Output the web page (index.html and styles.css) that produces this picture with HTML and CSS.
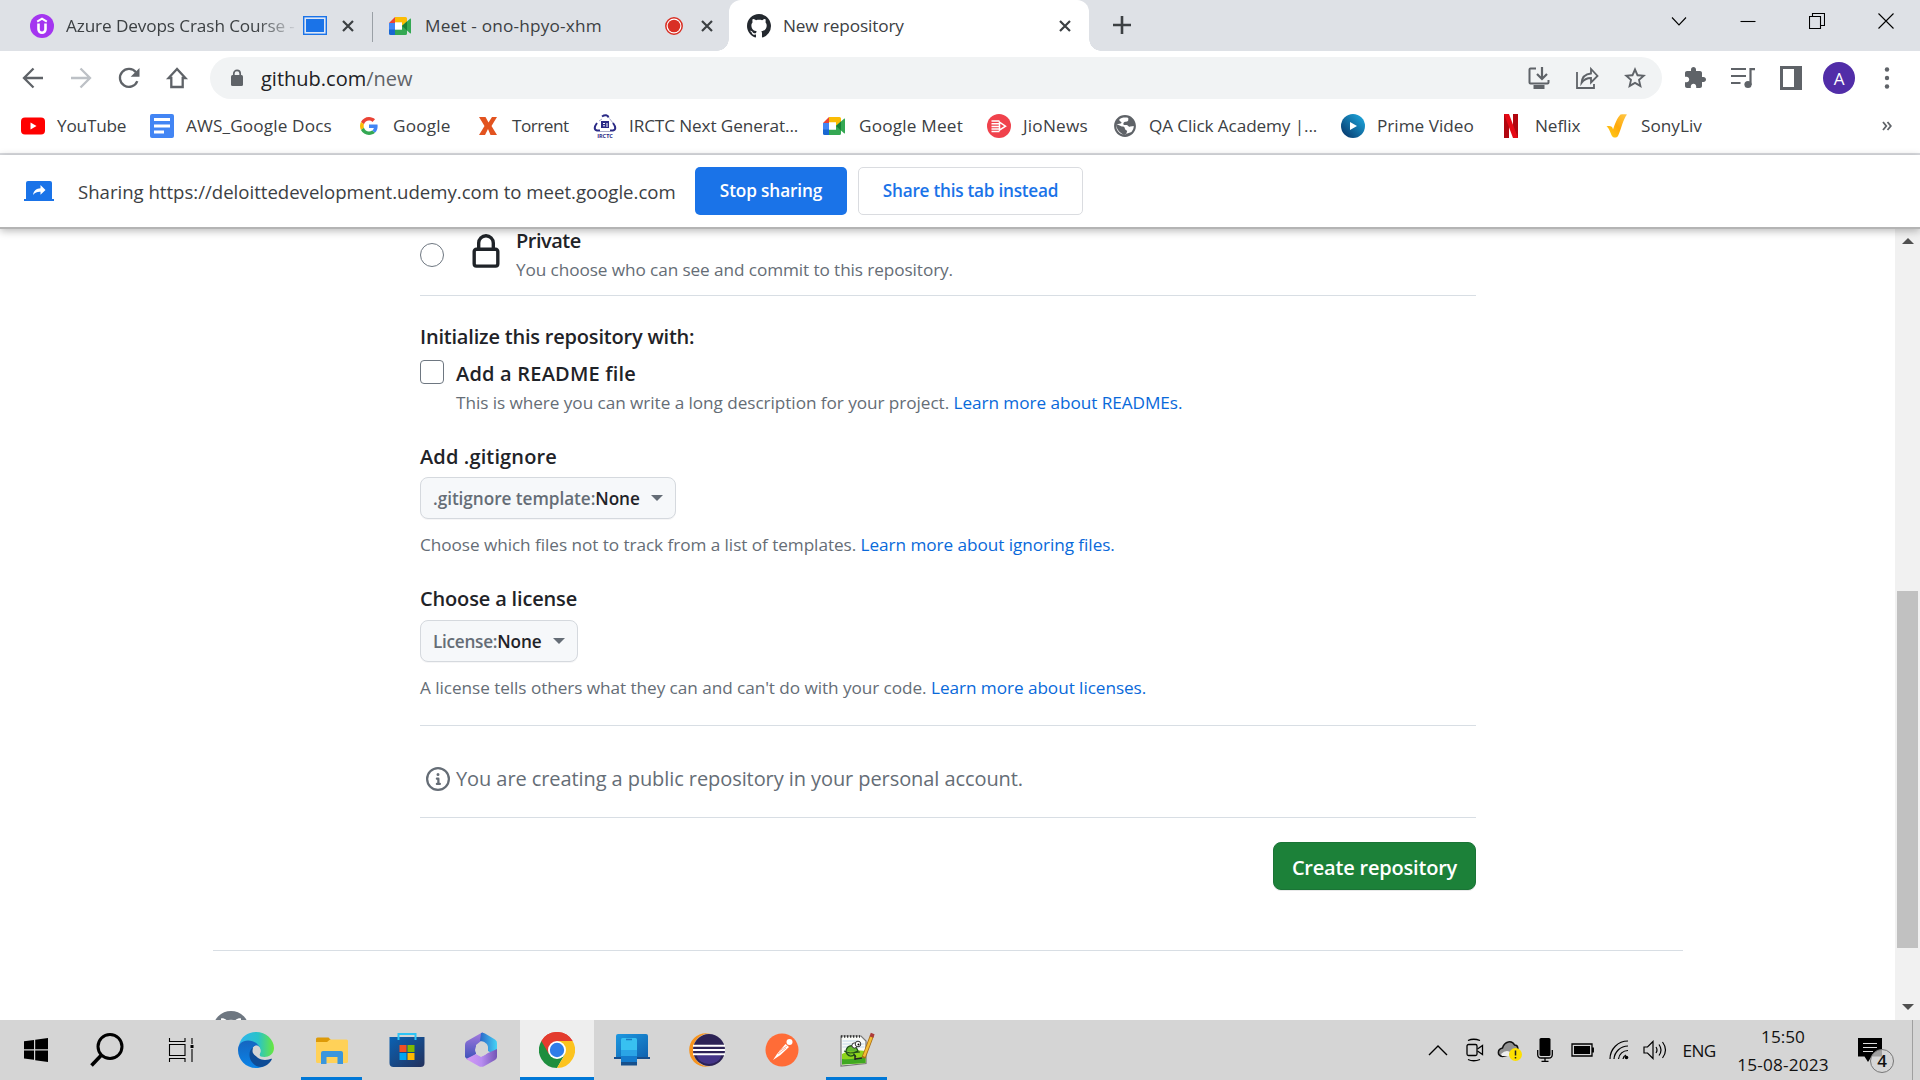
FILE: index.html
```html
<!DOCTYPE html>
<html lang="en">
<head>
<meta charset="utf-8">
<title>New repository</title>
<link rel="stylesheet" href="styles.css">
</head>
<body>
<div class="screen">

<header class="tabstrip">
  <div class="tab tab-first">
    <svg class="i24" viewBox="0 0 24 24"><circle cx="12" cy="12" r="12" fill="#a435f0"/><path d="M7.2 7.6 12 4.6l4.800 3" fill="none" stroke="#fff" stroke-width="2"/><path d="M8.500 9.500v5.800a3.500 3.500 0 0 0 7 0V9.500" fill="none" stroke="#fff" stroke-width="2.600"/></svg>
    <span class="tab-title fade ls-n12">Azure Devops Crash Course -</span>
    <svg class="share-ind" viewBox="0 0 24 19"><rect x=".7" y=".7" width="22.600" height="17.600" fill="#dfe7f5" stroke="#1a73e8" stroke-width="1.400"/><rect x="3" y="3" width="18" height="13" fill="#1a73e8"/></svg>
    <svg class="close" viewBox="0 0 12 12"><path d="M1 1l10 10M11 1 1 11"/></svg>
  </div>
  <div class="tab tab-second">
    <svg class="i24" viewBox="0 0 24 24"><use href="#meet"/></svg>
    <span class="tab-title ls-p20">Meet - ono-hpyo-xhm</span>
    <svg class="rec" viewBox="0 0 18 18"><circle cx="9" cy="9" r="8.200" fill="#fff" stroke="#d93025" stroke-width="1.500"/><circle cx="9" cy="9" r="6.300" fill="#d93025"/></svg>
    <svg class="close" viewBox="0 0 12 12"><path d="M1 1l10 10M11 1 1 11"/></svg>
  </div>
  <div class="tab tab-active">
    <svg class="i24" viewBox="0 0 16 16"><path fill="#24292f" d="M8 0C3.580 0 0 3.580 0 8c0 3.540 2.290 6.530 5.470 7.590.4.070.55-.17.55-.38 0-.19-.01-.82-.01-1.490-2.010.37-2.530-.49-2.690-.94-.09-.23-.48-.94-.82-1.130-.28-.15-.68-.52-.01-.53.63-.01 1.080.58 1.230.82.72 1.210 1.870.87 2.330.66.070-.52.28-.87.51-1.070-1.780-.2-3.640-.89-3.640-3.950 0-.87.31-1.590.82-2.150-.08-.2-.36-1.020.08-2.120 0 0 .67-.21 2.200.82.64-.18 1.320-.27 2-.27.68 0 1.360.09 2 .27 1.530-1.040 2.200-.82 2.200-.82.44 1.100.16 1.920.08 2.120.51.56.82 1.270.82 2.150 0 3.070-1.870 3.750-3.650 3.950.29.25.54.73.54 1.480 0 1.070-.01 1.930-.01 2.200 0 .21.15.46.55.38A8.013 8.013 0 0 0 16 8c0-4.420-3.580-8-8-8z"/></svg>
    <span class="tab-title ls-n12">New repository</span>
    <svg class="close" viewBox="0 0 12 12"><path d="M1 1l10 10M11 1 1 11"/></svg>
  </div>
  <svg class="plus" viewBox="0 0 18 18"><path d="M9 0v18M0 9h18" stroke="#3c4043" stroke-width="2.600"/></svg>
  <div class="winbtns">
    <svg viewBox="0 0 16 16"><path d="M1 4.500 8 12l7-7.500"/></svg>
    <svg viewBox="0 0 16 16"><path d="M.5 8.500h15"/></svg>
    <svg viewBox="0 0 16 16"><path d="M.5 3.500h11v12H.5zM3.500 3.500v-3h12v12h-4"/></svg>
    <svg viewBox="0 0 16 16"><path d="M.5.500l15 15M15.500.500l-15 15"/></svg>
  </div>
</header>

<div class="toolbar">
  <svg class="i24" viewBox="0 0 24 24"><path d="M22 12H3M12.500 2.500 3 12l9.500 9.500" fill="none" stroke="#5f6368" stroke-width="2.300"/></svg>
  <svg class="i24" viewBox="0 0 24 24"><path d="M2 12h19M11.500 2.500 21 12l-9.500 9.500" fill="none" stroke="#bdc1c6" stroke-width="2.300"/></svg>
  <svg class="i24" viewBox="0 0 24 24"><path d="M20.300 15.200A9 9 0 1 1 19 6.300" fill="none" stroke="#5f6368" stroke-width="2.300"/><path d="M22.500 2v8.800h-8.800z" fill="#5f6368"/></svg>
  <svg class="i24" viewBox="0 0 24 24"><path d="M12 3 3.600 12h2.700v9h11.400v-9h2.700z" fill="none" stroke="#5f6368" stroke-width="2.300"/></svg>
  <div class="omnibox">
    <svg class="padlock" viewBox="0 0 14 18"><rect x="1" y="6" width="12" height="11" rx="1.500" fill="#5f6368"/><path d="M3.800 7V4.500a3.200 3.200 0 0 1 6.400 0V7" fill="none" stroke="#5f6368" stroke-width="1.700"/></svg>
    <span class="url">github.com<span class="path">/new</span></span>
    <svg class="i24" viewBox="0 0 24 24"><path d="M9 2.500H3.500a1 1 0 0 0-1 1v13a1 1 0 0 0 1 1h17a1 1 0 0 0 1-1V14" fill="none" stroke="#5f6368" stroke-width="2"/><path d="M6.500 19h11v4h-11z" fill="#5f6368"/><path d="M15 1v12M10 8l5 5 5-5" fill="none" stroke="#5f6368" stroke-width="2.200"/></svg>
    <svg class="i24" viewBox="0 0 24 24"><path d="M2 6v16h17v-4" fill="none" stroke="#5f6368" stroke-width="1.800"/><path d="M6.500 17C7 11 10.500 8 16 7.500V3l6.500 7-6.500 6.500V12c-4 0-7 1.300-9.500 5z" fill="none" stroke="#5f6368" stroke-width="1.800"/></svg>
    <svg class="i24" viewBox="0 0 24 24"><path fill="#5f6368" d="M23 9l-7.900-.7L12 1 8.900 8.300 1 9l6 5.200L5.200 22 12 17.900l6.800 4.100L17 14.200zM12 15.700l-4 2.400 1-4.500-3.500-3 4.600-.4L12 6l1.900 4.200 4.600.4-3.500 3 1 4.500z"/></svg>
  </div>
  <div class="actions">
    <svg class="i24" viewBox="0 0 24 24"><path fill="#5f6368" d="M20.500 11H19V7c0-1.100-.9-2-2-2h-4V3.500C13 2.120 11.880 1 10.500 1S8 2.120 8 3.500V5H4c-1.100 0-1.990.9-1.990 2v3.800H3.500c1.490 0 2.700 1.210 2.700 2.700s-1.210 2.700-2.700 2.700H2V20c0 1.100.9 2 2 2h3.800v-1.500c0-1.490 1.210-2.700 2.700-2.700s2.700 1.210 2.700 2.700V22H17c1.100 0 2-.9 2-2v-4h1.500c1.380 0 2.500-1.120 2.500-2.500S21.880 11 20.500 11z"/></svg>
    <svg class="i24" viewBox="0 0 24 24"><path d="M0 3h15M0 10h15M0 17h9.500" stroke="#5f6368" stroke-width="2.200"/><path d="M19.500 19V3.100H24" fill="none" stroke="#5f6368" stroke-width="2.200"/><circle cx="17" cy="18.500" r="3.600" fill="#5f6368"/></svg>
    <svg class="i24" viewBox="0 0 24 24"><path d="M1 0h22v24H1zM4 3v18h11V3z" fill="#5f6368" fill-rule="evenodd"/></svg>
    <span class="avatar">A</span>
    <svg class="i24 dots" viewBox="0 0 24 24"><g fill="#5f6368"><circle cx="12" cy="3.500" r="2.200"/><circle cx="12" cy="12" r="2.200"/><circle cx="12" cy="20.500" r="2.200"/></g></svg>
  </div>
</div>

<nav class="bookmarks">
  <a class="bm"><svg class="i24" viewBox="0 0 24 24"><rect y="3.500" width="24" height="17" rx="4" fill="#f00"/><path d="M9.500 8.500v7l6-3.500z" fill="#fff"/></svg><span class="ls-n20">YouTube</span></a>
  <a class="bm"><svg class="i24" viewBox="0 0 24 24"><rect width="24" height="24" rx="2" fill="#4285f4"/><path d="M4 5.500h16M4 12h16M4 18h10" stroke="#fff" stroke-width="3"/></svg><span class="ls-p13">AWS_Google Docs</span></a>
  <a class="bm"><svg class="i24" viewBox="-8 -8 64 64"><path fill="#ea4335" d="M24 9.500c3.540 0 6.710 1.220 9.210 3.600l6.850-6.850C35.900 2.380 30.470 0 24 0 14.620 0 6.510 5.380 2.560 13.220l7.980 6.190C12.430 13.720 17.740 9.500 24 9.500z"/><path fill="#4285f4" d="M46.980 24.550c0-1.570-.15-3.090-.38-4.550H24v9.020h12.940c-.58 2.960-2.260 5.480-4.780 7.180l7.730 6c4.510-4.180 7.090-10.360 7.090-17.650z"/><path fill="#fbbc05" d="M10.530 28.590c-.48-1.450-.76-2.990-.76-4.590s.27-3.140.76-4.590l-7.980-6.190C.92 16.460 0 20.120 0 24c0 3.880.92 7.540 2.560 10.780z"/><path fill="#34a853" d="M24 48c6.480 0 11.930-2.130 15.890-5.810l-7.730-6c-2.150 1.450-4.920 2.300-8.160 2.300-6.260 0-11.570-4.220-13.470-9.910l-7.980 6.190C6.510 42.620 14.620 48 24 48z"/></svg><span class="ls-p20">Google</span></a>
  <a class="bm"><svg class="i24" viewBox="0 0 24 24"><path d="M3 3h6.500l3 5.500L16 3h5l-5.500 9L21 21h-6.500L12 15l-3 6H3l5.500-9z" fill="#e2531f"/></svg><span class="ls-n45">Torrent</span></a>
  <a class="bm"><svg class="i24 shown" viewBox="0 0 24 24"><g fill="none" stroke="#2a2a86" stroke-width="2"><path d="M9 2.500c3-2 6-1.500 6.500 1M4 9c-3 4-3 7 0 7.500h3M20 9c3 4 3 7 0 7.500h-3"/></g><g fill="none" stroke="#a9abc9" stroke-width="1"><path d="M6 7l3-2M16.500 4.500 20 9M7 17.500h10"/></g><path d="M8 7h8v7H8z" fill="#2a2a86"/><path d="M10 9.500h2M10 11.800h2M14 9v4" stroke="#fff"/><text x="12" y="23.500" class="irctc">IRCTC</text></svg><span class="ls-n12">IRCTC Next Generat...</span></a>
  <a class="bm"><svg class="i24" viewBox="0 0 24 24"><g id="meet"><path d="M6 3v6H0z" fill="#ea4335"/><path d="M0 9h6v7H0z" fill="#4285f4"/><path d="M0 15.500h6V21H1.500A1.500 1.500 0 0 1 0 19.500z" fill="#1967d2"/><path d="M6 3h10.500A1.500 1.500 0 0 1 18 4.500V9l-5 4V8.500H6z" fill="#fbbc04"/><path d="M6 15.500h7V12l5-4v11.500a1.500 1.500 0 0 1-1.500 1.500H6z" fill="#34a853"/><path d="M6 8.500h7v7H6z" fill="#fff"/><path d="M13 12l8-7.200c.5-.4 1-.3 1 .4v13.600c0 .7-.5.8-1 .4z" fill="#34a853"/><path d="M13 12l5-4.500v9z" fill="#188038"/></g></svg><span class="ls-p20">Google Meet</span></a>
  <a class="bm"><svg class="i24" viewBox="0 0 24 24"><circle cx="12" cy="12" r="12" fill="#f0424c"/><path d="M4.500 7h8M4.500 9.700h8M4.500 12.400h8M4.500 15.100h8M4.500 17.500h8" stroke="#fff" stroke-width="1.500"/><path d="M12.500 8.200v8l6-4z" fill="#f0424c" stroke="#fff" stroke-width="1.500"/></svg><span class="ls-p20">JioNews</span></a>
  <a class="bm"><svg class="i24" viewBox="1 1 22 22"><path fill="#5f6368" d="M12 2C6.480 2 2 6.480 2 12s4.480 10 10 10 10-4.480 10-10S17.520 2 12 2zm-1 17.930c-3.950-.49-7-3.850-7-7.930 0-.62.08-1.210.21-1.790L9 12.500c2 0 3 .5 3 2.500l2 1.500-1 3zM17.900 17.390c1.300-1.420 2.100-3.310 2.100-5.390l-3 .5c-1 .5-2-.5-3-1.500h-3c-1-1-.5-3 2-3 1 0 2-.5 2-1.500V4.590C13 4 8 4 6.500 6.500L9 9c-1 1-3 1-4.800 1.200C3.500 13 6 18 11 19.930z" fill-rule="evenodd"/></svg><span class="ls-n12">QA Click Academy |...</span></a>
  <a class="bm"><svg class="i24" viewBox="0 0 24 24"><defs><linearGradient id="pv" x1="0" y1="1" x2="1" y2="0"><stop offset=".1" stop-color="#083c70"/><stop offset="1" stop-color="#1fb0e6"/></linearGradient></defs><circle cx="12" cy="12" r="12" fill="url(#pv)"/><path d="M9 8v8l7-4z" fill="#fff"/></svg><span>Prime Video</span></a>
  <a class="bm"><svg class="i24" viewBox="0 0 24 24"><path d="M5 0h5v24H5zM14 0h5v24h-5z" fill="#b1060f"/><path d="M5 0h5l9 24h-5z" fill="#e50914"/></svg><span class="ls-n10">Neflix</span></a>
  <a class="bm"><svg class="i24" viewBox="0 0 24 24"><defs><linearGradient id="sl" x1="0" y1="1" x2="1" y2="0"><stop offset="0" stop-color="#ffd21a"/><stop offset=".5" stop-color="#ffa90a"/><stop offset="1" stop-color="#ffc94a"/></linearGradient></defs><path d="M1.500 12.500c3-1 6-.5 6.500 3C10 10 12 4 15.500.500 18 0 20 0 22 .500c-4 5-5.500 14-9 21.500-1.500 2-4.500 2-6 0C5 18.500 4.500 14.500 1.500 12.500z" fill="url(#sl)"/></svg><span>SonyLiv</span></a>
  <svg class="more" viewBox="0 0 10 10"><path d="M1 1l3.300 4L1 9M5.500 1l3.300 4-3.300 4"/></svg>
</nav>

<section class="infobar">
  <svg class="share-ico" viewBox="0 0 30 20"><path d="M4 0h22a2 2 0 0 1 2 2v16H2V2a2 2 0 0 1 2-2z" fill="#1a73e8"/><path d="M0 18h30v2H0z" fill="#1a73e8"/><path d="M9 14c.7-4.500 3.500-6.500 7.500-6.700V4l5 5-5 4.800v-3.100c-3-.2-5.500.8-7.500 3.300z" fill="#fff"/></svg>
  <span class="infotext">Sharing https://deloittedevelopment.udemy.com to meet.google.com</span>
  <button class="btn-stop">Stop sharing</button>
  <button class="btn-share">Share this tab instead</button>
</section>

<div class="viewport">
  <main class="page">
    <div class="form">
      <div class="visibility">
        <span class="radio"></span>
        <svg class="lock" viewBox="0 0 16 16"><path fill="#1f2328" d="M4 4a4 4 0 0 1 8 0v2h.25c.966 0 1.750.784 1.750 1.750v5.500A1.750 1.750 0 0 1 12.250 15h-8.500A1.750 1.750 0 0 1 2 13.250v-5.500C2 6.784 2.784 6 3.750 6H4Zm8.250 3.500h-8.500a.25.25 0 0 0-.25.25v5.500c0 .138.112.25.25.25h8.500a.25.25 0 0 0 .25-.25v-5.500a.25.25 0 0 0-.25-.25ZM10.500 6V4a2.500 2.500 0 1 0-5 0v2Z"/></svg>
        <div>
          <div class="label ls-n45">Private</div>
          <div class="note ls-n10">You choose who can see and commit to this repository.</div>
        </div>
      </div>
      <div class="label init ls-n20">Initialize this repository with:</div>
      <div class="readme">
        <span class="checkbox"></span>
        <div>
          <div class="label ls-p20">Add a README file</div>
          <div class="note ls-n06">This is where you can write a long description for your project. <a>Learn more about READMEs.</a></div>
        </div>
      </div>
      <div class="label field ls-p13">Add .gitignore</div>
      <button class="select sel-git"><span class="key">.gitignore template:</span><span class="val">None</span><span class="caret"></span></button>
      <div class="note after ls-n06">Choose which files not to track from a list of templates. <a>Learn more about ignoring files.</a></div>
      <div class="label field ls-n16">Choose a license</div>
      <button class="select sel-lic"><span class="key">License:</span><span class="val">None</span><span class="caret"></span></button>
      <div class="note after ls-n06">A license tells others what they can and can't do with your code. <a>Learn more about licenses.</a></div>
      <div class="notice">
        <svg class="i24" viewBox="0 0 16 16"><path fill="#656d76" d="M0 8a8 8 0 1 1 16 0A8 8 0 0 1 0 8Zm8-6.500a6.500 6.500 0 1 0 0 13 6.500 6.500 0 0 0 0-13ZM6.500 7.750A.75.75 0 0 1 7.250 7h1a.75.75 0 0 1 .75.75v2.750h.25a.75.75 0 0 1 0 1.500h-2a.75.75 0 0 1 0-1.500h.25v-2h-.25a.75.75 0 0 1-.75-.75ZM8 6a1 1 0 1 1 0-2 1 1 0 0 1 0 2Z"/></svg>
        <span class="ls-n08">You are creating a public repository in your personal account.</span>
      </div>
      <div class="submit"><button class="create">Create repository</button></div>
    </div>
    <footer class="footer">
      <svg class="mark" viewBox="0 0 36 36"><circle cx="18" cy="18" r="18" fill="#6e7781"/><path d="M8 7.500c2-.5 4 .5 6 1.800q4-1 8 0c2-1.300 4-2.300 6-1.800v7H8z" fill="#fff"/></svg>
    </footer>
  </main>
  <div class="scrollbar">
    <svg class="arrow" viewBox="0 0 12 6"><path d="M0 6 6 0l6 6z"/></svg>
    <div class="thumb"></div>
    <svg class="arrow" viewBox="0 0 12 6"><path d="M0 0l6 6 6-6z"/></svg>
  </div>
</div>

<div class="taskbar">
  <div class="apps">
    <div class="app"><svg class="i24" viewBox="0 0 24 24"><path d="M0 3.300 10 2v9.300H0zM11.200 1.800 24 0v11.300H11.200zM0 12.500h10v9.300L0 20.500zM11.200 12.500H24V24l-12.800-1.800z"/></svg></div>
    <div class="app"><svg class="i34" viewBox="0 0 34 34"><circle cx="20" cy="13.500" r="12" fill="none" stroke="#000" stroke-width="3"/><path d="M11.500 22 1.500 32.500" stroke="#000" stroke-width="3.600"/></svg></div>
    <div class="app"><svg class="i24 shown" viewBox="0 0 24 24"><path d="M.5 0v3.500h15.500V0M.5 24v-3.500h15.500V24M.5 6.500h15.500v11H.5zM23 0v6M23 11v13" fill="none" stroke="#000" stroke-width="1.100"/><rect x="21.500" y="7" width="3" height="3"/></svg></div>
    <div class="app"><svg class="i36" viewBox="0 0 36 36"><defs><linearGradient id="e1"><stop offset="0" stop-color="#2fb4f0"/><stop offset=".55" stop-color="#2ac3c8"/><stop offset="1" stop-color="#69e83c"/></linearGradient><linearGradient id="e2" x1="0" y1="0" x2="0" y2="1"><stop offset="0" stop-color="#1565c0"/><stop offset="1" stop-color="#0a84e8"/></linearGradient></defs><path d="M1 13C3 5 9.500 0 18 0c10 0 18 7.500 18 16 0 6-5 9-9.500 9-4 0-5.500-1-5-2.500 1.500-2 1.500-7-2.500-10C14 9 5 8 1 13z" fill="url(#e1)"/><path d="M0 18c0-6 4-9.500 10-9.500 6.500 0 11 4 12 8-1-2-3-3-5-2.500-5 2-6 10 1 16 3 3 7 4.500 8 4-2.500 1.500-5 2-8 2C8 36 0 28 0 18z" fill="url(#e2)"/><path d="M15 15c-6 5-4 15 3.500 19 7 3 13-2 15.500-7-1-1-3 1-7 1-6.500 0-13-5.500-12-13z" fill="#0e4c96"/><path d="M14.500 19c0-3.500 2-5.500 4-5.500 2.500 0 4.500 3 4 6-.3 2-1.500 2.500-1 3.500l1 2c-4 0-8-2.500-8-6z" fill="#d5d5d5"/></svg></div>
    <div class="app open"><svg class="i32" viewBox="0 0 32 27"><path d="M0 2a1.500 1.500 0 0 1 1.500-1.500h11L15 3l-3 3H0z" fill="#dd9a08"/><path d="M0 5h11l3-2.500h16.500A1.500 1.500 0 0 1 32 4v20.500a1.500 1.500 0 0 1-1.500 1.500h-29A1.500 1.500 0 0 1 0 24.500z" fill="#ffd158"/><path d="M5 27V16a2 2 0 0 1 2-2h18a2 2 0 0 1 2 2v11h-5.500v-7h-11v7z" fill="#3a96dd"/></svg></div>
    <div class="app"><svg class="i36" viewBox="0 0 36 36"><defs><linearGradient id="st" x1="0" y1="0" x2="1" y2="1"><stop offset="0" stop-color="#0a62b4"/><stop offset="1" stop-color="#24315c"/></linearGradient></defs><path d="M.5 5h35v26a4 4 0 0 1-4 4h-27a4 4 0 0 1-4-4z" fill="url(#st)"/><path d="M9.500 8V2h17v6" fill="none" stroke="#2ec4f5" stroke-width="2"/><path d="M10.500 13h7v7h-7z" fill="#f25022"/><path d="M18.500 13h7v7h-7z" fill="#7fba00"/><path d="M10.500 21h7v7h-7z" fill="#00a4ef"/><path d="M18.500 21h7v7h-7z" fill="#ffb900"/></svg></div>
    <div class="app"><svg class="i36" viewBox="0 0 36 36"><defs><linearGradient id="m1" x1="0" y1="0" x2="0" y2="1"><stop offset="0" stop-color="#a77be0"/><stop offset="1" stop-color="#3a50b8"/></linearGradient><linearGradient id="m2"><stop offset="0" stop-color="#2b66c8"/><stop offset="1" stop-color="#45d3f6"/></linearGradient><linearGradient id="m3"><stop offset="0" stop-color="#d79af5"/><stop offset=".5" stop-color="#b78cf0"/><stop offset="1" stop-color="#7355b5"/></linearGradient></defs><path d="M20 0 5 8.500A5 5 0 0 0 2 13v12l3 3 8-6v-9l5-4z" fill="url(#m1)"/><path d="M18 1a6 6 0 0 1 4 .5L32 7.500a4 4 0 0 1 2 4V24l-9-5v-4c0-3-4-6-8-6z" fill="url(#m2)"/><path d="M34 17v8a4 4 0 0 1-2 3l-10.500 6a6 6 0 0 1-6 0L3 27l10-5 5 3 7-4z" fill="url(#m3)"/><path d="M18.500 11q6.500 1 6.500 7.500-1.500 5-6.500 5.500-6-.5-6.500-6 .5-6 6.500-7z" fill="#d5d5d5"/></svg></div>
    <div class="app open active"><svg class="i36" viewBox="0 0 36 36"><path d="M18 18 2.400 9A18 18 0 0 1 33.600 9z" fill="#e33b2e"/><path d="M18 18 2.400 9A18 18 0 0 0 18 36l7.800-13.500z" fill="#1e8e3e"/><path d="M33.600 9H18l7.800 13.500L18 36A18 18 0 0 0 33.600 9z" fill="#fcc31e"/><path d="M2.400 9 10.200 22.500 18 18l0-9h15.600A18 18 0 0 0 2.400 9z" fill="#e33b2e"/><circle cx="18" cy="18" r="9" fill="#fff"/><circle cx="18" cy="18" r="7.200" fill="#2f7de9"/></svg></div>
    <div class="app"><svg class="i36" viewBox="0 0 36 36"><defs><linearGradient id="ph" x1="0" y1="0" x2="1" y2="1"><stop offset="0" stop-color="#1d98e0"/><stop offset="1" stop-color="#0f62b0"/></linearGradient></defs><path d="M4 2h28a2 2 0 0 1 2 2v21H2V4a2 2 0 0 1 2-2z" fill="url(#ph)"/><path d="M0 25h36v2H0z" fill="#174e8c"/><path d="M7 7.500A1.500 1.500 0 0 1 8.500 6h13A1.500 1.500 0 0 1 23 7.500V18H7z" fill="#38c1f1"/><path d="M7 18h16v6H7z" fill="#2aa4e6"/><path d="M7 24h16v6H7z" fill="#147bcd"/><path d="M7 30h16v3.500H7z" fill="#16508c"/><path d="M12 7.500h6" stroke="#1a79c2" stroke-width="1.500"/></svg></div>
    <div class="app"><svg class="i36" viewBox="0 0 36 36"><circle cx="17" cy="18" r="16.800" fill="#f7941e"/><circle cx="20.500" cy="18" r="16.500" fill="#d5d5d5"/><circle cx="20" cy="18" r="16" fill="#2c2255"/><path d="M8 23h24a12 9 0 0 1-24 0z" fill="#443588"/><path d="M4 13.700h32M4 18h32M4 22.300h32" stroke="#fff" stroke-width="1.900"/></svg></div>
    <div class="app"><svg class="i34" viewBox="0 0 34 34"><circle cx="17" cy="17" r="16.500" fill="#ff6c37"/><circle cx="24.500" cy="9" r="3" fill="#fff"/><path d="M20.500 11 24 14l-8.500 8-7.500 5 4-6z" fill="#fff"/><path d="M14 18l8-5M13 21l8-6" stroke="#ff9c78" stroke-width=".8"/></svg></div>
    <div class="app open"><svg class="i36" viewBox="0 0 36 36"><path d="M2 4h20l5 5v22.500L2 34z" fill="#f8faf7" stroke="#777" stroke-width="1.200"/><path d="M3.500 12h22M3.500 15h22M3.500 9h16" stroke="#c2d8e8"/><path d="M3 22c8-5 15-4 23.500-3v12L3 32.500z" fill="#8ed51c"/><path d="M3 27c8 1 15-1 23.500-2v6L3 32.500z" fill="#40a822"/><path d="M2 4.500h19" stroke="#333" stroke-width="2.500" stroke-dasharray="1.300 1.700"/><path d="M7 20c0-6 6-8 10-5l2 4-5 2 3 4M7 20c2 5 6 5 9 2M5 19l6 2 10-1" fill="#62b82e" stroke="#204d18" stroke-width="1.200"/><circle cx="15.500" cy="13.500" r="2.600" fill="#fff" stroke="#333"/><circle cx="19" cy="12" r="2.800" fill="#fff" stroke="#333"/><circle cx="19.500" cy="12.500" r="1"/><path d="M16 23v5M16 27l7-1" stroke="#262626" stroke-width="1.500"/><path d="M33 3.500 24.500 26" stroke="#a66b13" stroke-width="4"/><path d="M32.500 5 25 24.500" stroke="#f4bd35" stroke-width="2.400"/><path d="M33.700 1.500 32.500 5" stroke="#ac3c3b" stroke-width="4"/></svg></div>
  </div>
  <div class="tray">
    <svg viewBox="0 0 20 12" width="20" height="12"><path d="M1 11l9-9 9 9" fill="none" stroke="#000" stroke-width="1.400"/></svg>
    <svg viewBox="0 0 20 24" width="20" height="24"><g fill="none" stroke="#000" stroke-width="1.300"><rect x="2" y="6.500" width="10" height="11" rx="1.500"/><path d="M12.500 11l5-3.500v9l-5-3.500M3 2.500q5.500-2.500 12 0M3 21.500q5.500 2.500 12 0"/></g></svg>
    <svg viewBox="0 0 26 24" width="26" height="24"><path d="M5.500 18.500c-6-1-5-7.500 0-8.500 2-7 9.500-8 12-3 4 0 4 5 2 6-5 0-6 5.500-14 5.500z" fill="#919191" stroke="#111" stroke-width="1.500"/><path d="M4 16q5-5 9-2l-1 4H5z" fill="#eee"/><circle cx="18.500" cy="16.500" r="6.500" fill="#fde000"/><path d="M18.500 12.500v5M18.500 19v1.500" stroke="#222" stroke-width="1.500"/></svg>
    <svg viewBox="0 0 16 26" width="16" height="26"><rect x="2.500" y="1" width="11" height="18" rx="1.500"/><path d="M.7 13v4.500q0 3.500 3.500 3.500h7.600q3.500 0 3.500-3.500V13M8 21v3M4.500 24.300h7" fill="none" stroke="#000" stroke-width="1.300"/></svg>
    <svg viewBox="0 0 24 14" width="24" height="14"><path d="M1 1h20v12H1zM22.300 4.500v5" fill="none" stroke="#000" stroke-width="1.300"/><path d="M3 3h16v8H3z"/></svg>
    <svg viewBox="0 0 20 20" width="20" height="20"><g fill="none" stroke="#000" stroke-width="1.200"><path d="M1 19A18 18 0 0 1 19 1M5 19A14 14 0 0 1 19 6M9.500 19a9.500 9.500 0 0 1 9.500-8.500M14 19a5 5 0 0 1 3-4"/></g><circle cx="17.500" cy="17.500" r="1.800"/></svg>
    <svg viewBox="0 0 24 20" width="24" height="20"><path d="M1 7h3.500L10 1.500v17L4.500 13H1zM13 7q2 3 0 6M16 4.500q4 5.500 0 11M19.500 2q6 8 0 16" fill="none" stroke="#000" stroke-width="1.200"/></svg>
    <span class="lang">ENG</span>
    <div class="clock"><span>15:50</span><span class="ls-p20">15-08-2023</span></div>
    <div class="notif"><svg viewBox="0 0 24 24" width="24" height="24"><path d="M0 0h24v18.500H13.500L10 24l-3.500-5.500H0z"/><path d="M5 5.500h14M5 9.500h14M5 13.500h10" stroke="#ddd" stroke-width="1.200"/></svg><span class="count">4</span></div>
    <span class="peek"></span>
  </div>
</div>

</div>
</body>
</html>
```
FILE: styles.css
```css
* { box-sizing: border-box; }
body { margin: 0; font-family: "Open Sans", "Noto Sans", sans-serif; font-size: 17.2px; color: #3c4043; background: #fff; }
button { font-family: inherit; font-size: inherit; margin: 0; }
svg { display: block; flex: none; }
.screen { width: 1920px; height: 1080px; overflow: hidden; display: flex; flex-direction: column; white-space: nowrap; }
.i24 { width: 24px; height: 24px; flex: none; }
.i32 { width: 32px; height: 27px; }
.i34 { width: 34px; height: 34px; }
.i36 { width: 36px; height: 36px; }
.shown { overflow: visible; }

/* letter-spacing steps, in hundredths of a pixel */
.ls-p13 { letter-spacing: .13px; }
.ls-p20 { letter-spacing: .2px; }
.ls-n06 { letter-spacing: -.06px; }
.ls-n08 { letter-spacing: -.08px; }
.ls-n10 { letter-spacing: -.09px; }
.ls-n12 { letter-spacing: -.12px; }
.ls-n16 { letter-spacing: -.16px; }
.ls-n20 { letter-spacing: -.2px; }
.ls-n45 { letter-spacing: -.5px; }

/* tab strip */
.tabstrip { height: 51px; flex: none; background: #dee1e6; display: flex; align-items: stretch; }
.tab { display: flex; align-items: center; }
.tab-title { margin-left: 12px; flex: 1; }
.tab-first { width: 373px; padding: 0 19px 0 30px; background: linear-gradient(#9aa0a6, #9aa0a6) right 12px / 1.500px 30px no-repeat; }
.tab-first .fade { flex: 0 0 233px; -webkit-mask-image: linear-gradient(90deg, #000 82%, transparent); mask-image: linear-gradient(90deg, #000 82%, transparent); }
.share-ind { width: 24px; height: 19px; margin-left: 4px; }
.close { width: 12px; height: 12px; margin-left: 15px; }
.close path { fill: none; stroke: #3c4043; stroke-width: 2.200; }
.tab-second { width: 356px; padding: 0 16px; }
.rec { width: 18px; height: 18px; }
.tab-second .close { margin-left: 18px; }
.tab-active { width: 360px; padding: 0 18px; background: #fff; border-radius: 12px 12px 0 0; position: relative; }
.tab-active::before, .tab-active::after { content: ""; position: absolute; bottom: 0; width: 12px; height: 12px; }
.tab-active::before { left: -12px; background: radial-gradient(circle at 0 0, transparent 11.500px, #fff 12px); }
.tab-active::after { right: -12px; background: radial-gradient(circle at 100% 0, transparent 11.500px, #fff 12px); }
.plus { width: 18px; height: 18px; margin: 16px 0 0 24px; }
.winbtns { margin-left: auto; margin-right: 26px; padding-top: 13px; display: flex; gap: 53px; }
.winbtns svg { width: 16px; height: 16px; }
.winbtns path { fill: none; stroke: #000; stroke-width: 1.100; }

/* toolbar */
.toolbar { height: 54px; flex: none; padding: 0 21px; display: flex; align-items: center; gap: 24px; }
.omnibox { width: 1452px; height: 42px; margin-left: -3px; border-radius: 21px; background: #f1f3f4; padding: 0 15px 0 20px; display: flex; align-items: center; gap: 24px; }
.padlock { width: 14px; height: 18px; margin-right: -7px; }
.url { flex: 1; font-size: 20px; color: #202124; }
.url .path { color: #5f6368; }
.actions { display: flex; align-items: center; gap: 24px; margin-left: -3px; }
.avatar { width: 32px; height: 32px; border-radius: 50%; background: #512da8; color: #fff; font-size: 17px; line-height: 33px; text-align: center; margin: 0 -4px; }

/* bookmarks */
.bookmarks { height: 50px; flex: none; padding: 0 0 7px 21px; border-bottom: 2px solid #dadce0; display: grid; grid-template-columns: 129px 207px 119px 117px 230px 164px 126px 228px 158px 106px 256px auto; align-items: center; }
.bm { display: flex; align-items: center; gap: 12px; }
.irctc { font: 700 5.500px "Open Sans", sans-serif; fill: #2a2a86; text-anchor: middle; }
.more { width: 10px; height: 10px; margin-left: 21px; }
.more path { fill: none; stroke: #5f6368; stroke-width: 1.800; }

/* sharing bar */
.infobar { height: 74px; flex: none; padding: 0 24px; border-bottom: 2px solid #b4b4b4; display: flex; align-items: center; position: relative; background: #fff; box-shadow: 0 2px 8px rgba(0,0,0,.28); z-index: 1; }
.share-ico { width: 30px; height: 20px; }
.infotext { width: 617px; margin-left: 24px; font-size: 18.600px; letter-spacing: -.01px; }
.btn-stop, .btn-share { height: 48px; border-radius: 5px; padding: 0 0 1px; font-weight: 600; }
.btn-stop { width: 152px; border: 0; background: #1a73e8; color: #fff; letter-spacing: -.12px; }
.btn-share { width: 225px; margin-left: 11px; background: #fff; border: 1px solid #dadce0; color: #1a73e8; letter-spacing: -.25px; }

/* page */
.viewport { flex: 1; min-height: 0; display: flex; overflow: hidden; }
.page { flex: 1; height: 791px; overflow: hidden; }
.form { width: 1056px; margin-left: 420px; margin-top: -3px; color: #1f2328; }
.label { font-size: 20px; font-weight: 600; height: 28px; line-height: 30px; }
.note { height: 30px; line-height: 32px; color: #656d76; }
.note a { color: #0969da; }
.visibility { height: 70px; border-bottom: 1px solid #d8dee4; display: flex; align-items: flex-start; }
.radio { width: 24px; height: 24px; margin-top: 17px; border: 1.500px solid #6e7781; border-radius: 50%; flex: none; }
.lock { width: 36px; height: 36px; margin: 8px 12px 0 24px; }
.init { margin-top: 26px; }
.readme { display: flex; gap: 12px; margin-top: 9px; }
.checkbox { width: 24px; height: 24px; margin-top: 1px; border: 1px solid #6e7781; border-radius: 4px; flex: none; }
.field { margin-top: 25px; }
.select { height: 42px; margin-top: 7px; padding: 0 12px; display: flex; align-items: center; border: 1px solid #d5d9de; border-radius: 8px; background: #f6f8fa; box-shadow: 0 1px 0 rgba(31,35,40,.04); }
.sel-git { width: 256px; }
.sel-lic { width: 158px; margin-top: 8px; }
.key { font-weight: 600; color: #656d76; letter-spacing: -.05px; }
.sel-lic .key { letter-spacing: -.28px; }
.val { font-weight: 600; color: #1f2328; letter-spacing: -.1px; }
.caret { margin-left: auto; border: 6px solid transparent; border-top-color: #656d76; border-bottom: 0; }
.after { margin-top: 10px; }
.notice { height: 93px; margin-top: 23px; padding: 15px 6px 0; border: solid #d8dee4; border-width: 1px 0; display: flex; align-items: center; gap: 6px; font-size: 20px; color: #656d76; }
.notice span { margin-top: -2px; }
.submit { display: flex; justify-content: flex-end; margin-top: 24px; }
.create { width: 203px; height: 48px; padding: 2px 0 0; border: 1px solid #1a7436; border-radius: 8px; background: #1c8139; color: #fff; font-size: 20px; font-weight: 600; letter-spacing: -.2px; box-shadow: 0 1px 0 rgba(31,35,40,.1); }
.footer { width: 1470px; margin: 60px 0 0 213px; padding-top: 60px; border-top: 1px solid #d8dee4; }
.mark { width: 36px; height: 36px; }

/* scrollbar */
.scrollbar { width: 25px; background: #f1f1f1; display: flex; flex-direction: column; align-items: center; padding: 9px 0 10px; }
.arrow { width: 12px; height: 6px; fill: #505050; }
.thumb { width: 21px; height: 357px; margin: 347px 0 auto; background: #c1c1c1; }

/* taskbar */
.taskbar { height: 60px; flex: none; background: #d5d5d5; display: flex; justify-content: space-between; }
.apps { display: grid; grid-template-columns: 71px 72px 75px 76px 75px 75px 74px 77px 74px 75px 75px 75px; }
.app { display: flex; align-items: center; justify-content: center; }
.open { margin: 0 7px; border-bottom: 3px solid #0078d7; padding-top: 3px; }
.active { margin: 0 1px 0 2px; background: #eee; }
.tray { display: grid; grid-template-columns: 36px 37px 33px 38px 37px 36px 35px 54px 114px 72px 8px; align-items: center; justify-items: center; color: #111; }
.lang { letter-spacing: -.7px; }
.clock { display: flex; flex-direction: column; align-items: center; line-height: 28px; padding-top: 1px; }
.notif { position: relative; width: 36px; height: 24px; }
.count { position: absolute; left: 12px; top: 11px; width: 24px; height: 24px; border: 1px solid #777; border-radius: 50%; background: rgba(213,213,213,.75); font-size: 17px; font-weight: 600; line-height: 22px; text-align: center; }
.peek { width: 8px; height: 60px; border-left: 1px solid #a0a0a0; }
```
